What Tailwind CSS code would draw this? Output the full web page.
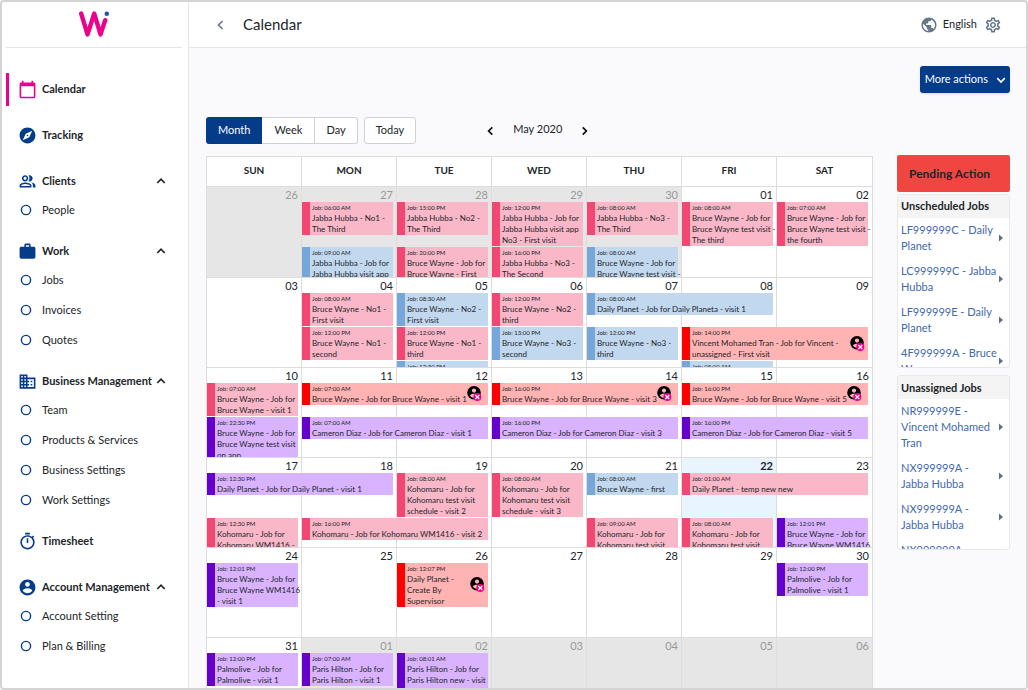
<!DOCTYPE html>
<html lang="en">
<head>
<meta charset="utf-8">
<meta name="viewport" content="width=device-width, initial-scale=1">
<title>Calendar</title>
<script src="https://cdn.jsdelivr.net/npm/@tailwindcss/browser@4"></script>
</head>
<body class="font-['Lato',sans-serif] text-[#212529]">
<svg class="hidden" aria-hidden="true">
  <symbol id="i-dot" viewBox="0 0 12 12"><circle cx="6" cy="6" r="4.6" fill="none" stroke="currentColor" stroke-width="1.4"/></symbol>
  <symbol id="i-up" viewBox="0 0 10 10"><path d="M1.3 7 5 3.2 8.7 7" fill="none" stroke="currentColor" stroke-width="1.7"/></symbol>
  <symbol id="i-unassigned" viewBox="0 0 16 16">
    <circle cx="7" cy="6.8" r="6.8" fill="#000"/>
    <circle cx="7" cy="4.6" r="2.1" fill="#ffb3b3"/>
    <path d="M2.9 9.8C3.2 8.2 5.4 7.7 7 7.7s3.8.5 4.1 2.1A5 5 0 0 1 7 11.900a5 5 0 0 1-4.100-2.100z" fill="#ffb3b3"/>
    <circle cx="10.300" cy="11" r="4" fill="#ec008c"/>
    <path d="m8.300 9 4 4m0-4-4 4" stroke="#fff" stroke-width="1.1"/>
  </symbol>
</svg>

<div class="flex h-screen overflow-hidden rounded-sm border-2 border-[#d4d4d4] bg-white">
  <aside class="w-[187px] shrink-0 border-r border-[#e3e5e8]">
    <div class="mr-1.5 ml-1 flex h-[46px] items-center justify-center border-b border-[#e3e5e8]">
      <svg class="h-[28px] w-[32px]" viewBox="0 0 32 28" role="img" aria-label="Home">
        <path d="M3.200 2.600 9.500 23.400 16.200 2.600 22.500 23.400 27.200 9.200" fill="none" stroke="#ec008c" stroke-width="4.400" stroke-linejoin="round" stroke-linecap="round"/>
        <circle cx="28.800" cy="2.700" r="2.300" fill="#1f5aa6"/>
      </svg>
    </div>
    <nav id="nav" class="pt-[25px] text-[11px]" aria-label="Main"></nav>
  </aside>

  <div class="flex min-w-0 flex-1 flex-col">
    <header class="flex h-[46px] shrink-0 items-center border-b border-[#e3e5e8] pr-[24px] pl-[26px]">
      <button class="mr-[16px] text-[#64748b]" aria-label="Back">
        <svg class="h-[12px] w-[12px]" viewBox="0 0 12 12"><path d="M7.500 2 3.500 6l4 4" fill="none" stroke="currentColor" stroke-width="1.600"/></svg>
      </button>
      <h1 class="flex-1 text-[15px]">Calendar</h1>
      <button class="flex items-center gap-[5px] text-[11px]">
        <svg class="h-[18px] w-[18px] text-[#64788a]" viewBox="0 0 24 24" fill="currentColor"><path d="M12 2C6.480 2 2 6.480 2 12s4.480 10 10 10 10-4.480 10-10S17.520 2 12 2zm-1 17.930c-3.950-.49-7-3.850-7-7.930 0-.62.080-1.210.21-1.790L9 15v1c0 1.100.9 2 2 2v1.930zm6.900-2.540c-.26-.81-1-1.390-1.900-1.390h-1v-3c0-.55-.45-1-1-1H8v-2h2c.55 0 1-.45 1-1V7h2c1.100 0 2-.9 2-2v-.41c2.930 1.190 5 4.060 5 7.410 0 2.080-.8 3.970-2.100 5.390z"/></svg>
        English
      </button>
      <button class="ml-[7px] text-[#64788a]" aria-label="Settings">
        <svg class="h-[18px] w-[18px]" viewBox="0 0 24 24" fill="currentColor"><path d="M19.430 12.980c.04-.32.070-.64.070-.98s-.03-.66-.07-.98l2.110-1.650c.19-.15.24-.42.120-.64l-2-3.460c-.09-.16-.26-.25-.44-.25-.06 0-.12.010-.17.030l-2.490 1c-.52-.4-1.080-.73-1.690-.98l-.38-2.650C14.460 2.180 14.250 2 14 2h-4c-.25 0-.46.18-.49.420l-.38 2.650c-.61.250-1.170.590-1.690.980l-2.490-1c-.06-.02-.12-.03-.18-.03-.17 0-.34.090-.43.250l-2 3.460c-.13.220-.07.490.120.640l2.110 1.650c-.04.320-.07.650-.07.980s.030.660.070.980l-2.110 1.650c-.19.150-.24.420-.12.640l2 3.460c.09.160.260.250.440.250.060 0 .12-.01.170-.03l2.490-1c.52.400 1.080.730 1.690.980l.38 2.650c.03.240.240.420.490.420h4c.25 0 .46-.18.490-.42l.38-2.650c.61-.25 1.170-.59 1.690-.98l2.490 1c.06.020.120.030.180.030.17 0 .34-.09.430-.25l2-3.460c.12-.22.070-.49-.12-.64l-2.110-1.650zm-1.980-1.710c.04.310.050.520.050.730s-.02.430-.05.730l-.14 1.130.89.700 1.080.840-.7 1.210-1.270-.51-1.040-.42-.9.680c-.43.320-.84.560-1.250.730l-1.060.430-.16 1.130-.2 1.350h-1.400l-.19-1.350-.16-1.130-1.060-.43c-.43-.18-.83-.41-1.230-.71l-.91-.7-1.060.430-1.270.510-.7-1.210 1.080-.84.890-.7-.14-1.130c-.03-.31-.05-.54-.05-.74s.020-.43.050-.73l.14-1.130-.89-.7-1.080-.84.700-1.210 1.270.510 1.040.420.900-.68c.43-.32.840-.56 1.250-.73l1.060-.43.160-1.130.2-1.350h1.390l.19 1.350.16 1.130 1.060.430c.43.180.83.410 1.230.710l.91.700 1.060-.43 1.270-.51.700 1.210-1.070.850-.89.700.14 1.130zM12 8c-2.210 0-4 1.790-4 4s1.790 4 4 4 4-1.790 4-4-1.790-4-4-4zm0 6c-1.100 0-2-.9-2-2s.9-2 2-2 2 .9 2 2-.9 2-2 2z"/></svg>
      </button>
    </header>

    <main class="min-h-0 flex-1 overflow-hidden bg-[#fafafc] pr-[16px] pl-[17px]">
      <div class="flex justify-end pt-[18px]">
        <button class="flex h-[27px] items-center gap-[8px] rounded-[3px] bg-[#043c8a] pr-[4px] pl-[5px] text-[11px] text-white shadow">
          More actions
          <svg class="h-[10px] w-[10px]" viewBox="0 0 10 10"><path d="M1.200 3.200 5 7l3.800-3.800" fill="none" stroke="currentColor" stroke-width="1.700"/></svg>
        </button>
      </div>

      <div class="mt-[24px] flex h-[27px] items-center text-[11px]">
        <div class="flex h-full rounded-[3px]" role="group" aria-label="View">
          <button class="rounded-l-[3px] bg-[#043c8a] px-[12px] text-white" aria-pressed="true">Month</button>
          <button class="border-y border-r border-[#cfd1d4] bg-white px-[12px]">Week</button>
          <button class="rounded-r-[3px] border-y border-r border-[#cfd1d4] bg-white px-[11px]">Day</button>
        </div>
        <button class="ml-[6px] h-full rounded-[3px] border border-[#cfd1d4] bg-white px-[11px]">Today</button>
        <div class="ml-[69px] flex items-center gap-[18px]">
          <button aria-label="Previous month"><svg class="h-[10px] w-[10px]" viewBox="0 0 10 10"><path d="M7.300 1.300 3.600 5l3.700 3.700" fill="none" stroke="#111" stroke-width="1.700"/></svg></button>
          <h2 class="pb-[2px]">May 2020</h2>
          <button aria-label="Next month"><svg class="h-[10px] w-[10px]" viewBox="0 0 10 10"><path d="M2.700 1.300 6.400 5 2.700 8.700" fill="none" stroke="#111" stroke-width="1.700"/></svg></button>
        </div>
      </div>

      <div class="mt-[11px] flex items-start gap-[24px]">
        <section class="mt-px min-w-0 flex-1 border border-b-0 border-[#dddddd] bg-white" aria-label="May 2020">
          <div class="grid h-[29px] grid-cols-7 divide-x divide-[#dddddd] text-center text-[10px] leading-[27px] font-bold">
            <div>SUN</div><div>MON</div><div>TUE</div><div>WED</div><div>THU</div><div>FRI</div><div>SAT</div>
          </div>
          <div id="weeks"></div>
        </section>

        <aside class="w-[113px] shrink-0">
          <h2 class="mb-[2px] h-[37px] rounded-[2px] bg-[#f04641] pl-[12px] text-[12px] leading-[38px] font-bold">Pending Action</h2>
          <section class="h-[174px] overflow-hidden rounded-[3px] border border-[#e6e8ec] bg-white">
            <h3 class="h-[23px] bg-[#f4f4f4] pl-[3px] text-[11px] leading-[22px] font-bold">Unscheduled Jobs</h3>
            <ul id="unscheduled" class="flex flex-col gap-[9px] pt-[4px] pr-[6px] pl-[3px] text-[11px] leading-[16px] text-[#3f68ad]"></ul>
          </section>
          <section class="mt-[7px] h-[175px] overflow-hidden rounded-[3px] border border-[#e6e8ec] bg-white">
            <h3 class="h-[23px] bg-[#f4f4f4] pl-[3px] text-[11px] leading-[23px] font-bold">Unassigned Jobs</h3>
            <ul id="unassigned" class="flex flex-col gap-[9px] pt-[4px] pr-[6px] pl-[3px] text-[11px] leading-[16px] text-[#3f68ad]"></ul>
          </section>
        </aside>
      </div>
    </main>
  </div>
</div>

<script>
const icons = {
  calendar: '<path d="M20 3h-1V1h-2v2H7V1H5v2H4c-1.100 0-2 .9-2 2v16c0 1.100.9 2 2 2h16c1.100 0 2-.9 2-2V5c0-1.100-.9-2-2-2zm0 18H4V8h16v13z"/>',
  compass: '<path d="M12 10.900c-.61 0-1.100.49-1.100 1.100s.49 1.100 1.100 1.100c.61 0 1.100-.49 1.100-1.100s-.49-1.100-1.100-1.100zM12 2C6.480 2 2 6.480 2 12s4.480 10 10 10 10-4.480 10-10S17.520 2 12 2zm2.190 12.190L6 18l3.810-8.190L18 6l-3.810 8.190z"/>',
  people: '<path d="M16.500 13.200C18 14.100 18.800 15.300 18.800 17v2.500H22V17c0-2.180-2.800-3.400-5.500-3.800zM14.500 12c2.210 0 4-1.790 4-4s-1.790-4-4-4c-.47 0-.91.100-1.330.240C14 5.270 14.500 6.580 14.500 8s-.5 2.730-1.330 3.760c.42.140.860.240 1.330.240zM9 12c2.210 0 4-1.790 4-4s-1.790-4-4-4-4 1.790-4 4 1.790 4 4 4zm0-6c1.100 0 2 .9 2 2s-.9 2-2 2-2-.9-2-2 .9-2 2-2zm0 7.200c-2.670 0-7 1.140-7 3.800v2.500h15V17c0-2.660-5.330-3.800-8-3.800zm6 4.400H4v-.6C4.200 16.290 6.300 15.200 9 15.200s5.800 1.090 6 1.800v.6z"/>',
  work: '<path d="M20 6h-4V4c0-1.110-.89-2-2-2h-4c-1.110 0-2 .89-2 2v2H4c-1.110 0-2 .89-2 2v11c0 1.110.890 2 2 2h16c1.110 0 2-.89 2-2V8c0-1.110-.89-2-2-2zm-6 0h-4V4h4v2z"/>',
  building: '<path d="M12 7V3H2v18h20V7H12zM6 19H4v-2h2v2zm0-4H4v-2h2v2zm0-4H4V9h2v2zm0-4H4V5h2v2zm4 12H8v-2h2v2zm0-4H8v-2h2v2zm0-4H8V9h2v2zm0-4H8V5h2v2zm10 12h-8v-2h2v-2h-2v-2h2v-2h-2V9h8v10zm-2-8h-2v2h2v-2zm0 4h-2v2h2v-2z"/>',
  timer: '<path d="M15 1H9v2h6V1zm-4 13h2V8h-2v6zm8.030-6.610 1.420-1.420c-.43-.51-.9-.99-1.410-1.410l-1.420 1.420C16.070 4.740 14.120 4 12 4c-4.970 0-9 4.030-9 9s4.020 9 9 9 9-4.030 9-9c0-2.120-.74-4.070-1.970-5.610zM12 20c-3.870 0-7-3.130-7-7s3.130-7 7-7 7 3.130 7 7-3.130 7-7 7z"/>',
  account: '<path d="M12 2C6.480 2 2 6.480 2 12s4.480 10 10 10 10-4.480 10-10S17.520 2 12 2zm0 3c1.660 0 3 1.340 3 3s-1.340 3-3 3-3-1.340-3-3 1.340-3 3-3zm0 14.200c-2.500 0-4.710-1.280-6-3.220.030-1.990 4-3.080 6-3.080 1.990 0 5.970 1.090 6 3.080-1.290 1.940-3.500 3.220-6 3.220z"/>'
};
const nav = [
  ['Calendar', 'calendar', null, true],
  ['Tracking', 'compass'],
  ['Clients', 'people', ['People']],
  ['Work', 'work', ['Jobs', 'Invoices', 'Quotes']],
  ['Business Management', 'building', ['Team', 'Products & Services', 'Business Settings', 'Work Settings']],
  ['Timesheet', 'timer'],
  ['Account Management', 'account', ['Account Setting', 'Plan & Billing']]
];
const esc = s => s.replace(/&/g, '&amp;');
document.getElementById('nav').innerHTML = nav.map(([label, icon, subs, active]) => {
  const svg = `<svg class="h-[19px] w-[19px] shrink-0 ${active ? 'text-[#ec008c]' : 'text-[#043c8a]'}" viewBox="0 0 24 24" fill="currentColor">${icons[icon]}</svg>`;
  if (!subs) return `<a href="#" class="mb-[13px] ml-1 flex h-[33px] items-center gap-[5px] border-l-[3px] pl-[9px] font-bold ${active ? 'border-[#ec008c]' : 'border-transparent'}">${svg}${label}</a>`;
  return `<div class="mb-[10px] pt-[2px]">
    <button class="ml-[16px] flex h-[28px] w-[148px] items-center gap-[5px] font-bold whitespace-nowrap" aria-expanded="true">${svg}<span class="min-w-0 flex-1 text-left">${label}</span><svg class="h-[10px] w-[10px] shrink-0"><use href="#i-up"/></svg></button>
    ${subs.map(s => `<a href="#" class="flex h-[30px] items-center gap-[10px] pl-[18px]"><svg class="h-[12px] w-[12px] text-[#043c8a]"><use href="#i-dot"/></svg>${esc(s)}</a>`).join('')}
  </div>`;
}).join('');

const tone = {
  pink: 'border-[#f24773] bg-[#f9b7c8]',
  blue: 'border-[#76a7da] bg-[#c1d8ef]',
  red: 'border-[#ff0000] bg-[#ffb3b3]',
  violet: 'border-[#6600cc] bg-[#d9b3ff]'
};
const col = ['', 'col-start-1', 'col-start-2', 'col-start-3', 'col-start-4', 'col-start-5', 'col-start-6', 'col-start-7'];
const row = ['', 'row-start-1', 'row-start-2', 'row-start-3'];
const span = ['', 'col-span-1', 'col-span-2'];
// events: [row, column, span, tone, time, title]; "|" starts a new line of the title
const weeks = [
  { days: '26 27 28 29 30 01 02', out: [0, 1, 2, 3, 4], events: [
    [1, 2, 1, 'pink', '06:00 AM', 'Jabba Hubba - No1 -|The Third'],
    [1, 3, 1, 'pink', '15:00 PM', 'Jabba Hubba - No2 -|The Third'],
    [1, 4, 1, 'pink', '12:00 PM', 'Jabba Hubba - Job for|Jabba Hubba visit app|No3 - First visit'],
    [1, 5, 1, 'pink', '08:00 AM', 'Jabba Hubba - No3 -|The Third'],
    [1, 6, 1, 'pink', '08:00 AM', 'Bruce Wayne - Job for|Bruce Wayne test visit -|The third'],
    [1, 7, 1, 'pink', '07:00 AM', 'Bruce Wayne - Job for|Bruce Wayne test visit -|the fourth'],
    [2, 2, 1, 'blue', '09:00 AM', 'Jabba Hubba - Job for|Jabba Hubba visit app'],
    [2, 3, 1, 'pink', '20:00 PM', 'Bruce Wayne - Job for|Bruce Wayne - First'],
    [2, 4, 1, 'pink', '16:00 PM', 'Jabba Hubba - No3 -|The Second'],
    [2, 5, 1, 'blue', '08:00 AM', 'Bruce Wayne - Job for|Bruce Wayne test visit -']] },
  { days: '03 04 05 06 07 08 09', out: [], events: [
    [1, 2, 1, 'pink', '08:00 AM', 'Bruce Wayne - No1 -|First visit'],
    [1, 3, 1, 'blue', '08:30 AM', 'Bruce Wayne - No2 -|First visit'],
    [1, 4, 1, 'pink', '12:00 PM', 'Bruce Wayne - No2 -|third'],
    [1, 5, 2, 'blue', '08:00 AM', 'Daily Planet - Job for Daily Planeta - visit 1'],
    [2, 2, 1, 'pink', '12:00 PM', 'Bruce Wayne - No1 -|second'],
    [2, 3, 1, 'pink', '12:00 PM', 'Bruce Wayne - No1 -|third'],
    [2, 4, 1, 'blue', '13:00 PM', 'Bruce Wayne - No3 -|second'],
    [2, 5, 1, 'blue', '12:00 PM', 'Bruce Wayne - No3 -|third'],
    [2, 6, 2, 'red', '14:00 PM', 'Vincent Mohamed Tran - Job for Vincent -|unassigned - First visit'],
    [3, 3, 1, 'blue', '12:30 PM', ''],
    [3, 6, 1, 'blue', '05:00 AM', '']] },
  { days: '10 11 12 13 14 15 16', out: [], events: [
    [1, 1, 1, 'pink', '07:00 AM', 'Bruce Wayne - Job for|Bruce Wayne - visit 1'],
    [1, 2, 2, 'red', '07:00 AM', 'Bruce Wayne - Job for Bruce Wayne - visit 1'],
    [1, 4, 2, 'red', '16:00 PM', 'Bruce Wayne - Job for Bruce Wayne - visit 3'],
    [1, 6, 2, 'red', '16:00 PM', 'Bruce Wayne - Job for Bruce Wayne - visit 5'],
    [2, 1, 1, 'violet', '22:30 PM', 'Bruce Wayne - Job for|Bruce Wayne test visit|on app'],
    [2, 2, 2, 'violet', '07:00 AM', 'Cameron Diaz - Job for Cameron Diaz - visit 1'],
    [2, 4, 2, 'violet', '16:00 PM', 'Cameron Diaz - Job for Cameron Diaz - visit 3'],
    [2, 6, 2, 'violet', '16:00 PM', 'Cameron Diaz - Job for Cameron Diaz - visit 5']] },
  { days: '17 18 19 20 21 22 23', out: [], today: 5, events: [
    [1, 1, 2, 'violet', '12:30 PM', 'Daily Planet - Job for Daily Planet - visit 1'],
    [1, 3, 1, 'pink', '08:00 AM', 'Kohomaru - Job for|Kohomaru test visit|schedule - visit 2'],
    [1, 4, 1, 'pink', '08:00 AM', 'Kohomaru - Job for|Kohomaru test visit|schedule - visit 3'],
    [1, 5, 1, 'blue', '08:00 AM', 'Bruce Wayne - first'],
    [1, 6, 2, 'pink', '01:00 AM', 'Daily Planet - temp new new'],
    [2, 1, 1, 'pink', '12:30 PM', 'Kohomaru - Job for|Kohomaru WM1416 -'],
    [2, 2, 2, 'pink', '16:00 PM', 'Kohomaru - Job for Kohomaru WM1416 - visit 2'],
    [2, 5, 1, 'pink', '09:00 AM', 'Kohomaru - Job for|Kohomaru test visit'],
    [2, 6, 1, 'pink', '08:00 AM', 'Kohomaru - Job for|Kohomaru test visit'],
    [2, 7, 1, 'violet', '12:01 PM', 'Bruce Wayne - Job for|Bruce Wayne WM1416']] },
  { days: '24 25 26 27 28 29 30', out: [], events: [
    [1, 1, 1, 'violet', '12:01 PM', 'Bruce Wayne - Job for|Bruce Wayne WM1416|- visit 1'],
    [1, 3, 1, 'red', '12:07 PM', 'Daily Planet -|Create By|Supervisor'],
    [1, 7, 1, 'violet', '12:00 PM', 'Palmolive - Job for|Palmolive - visit 1']] },
  { days: '31 01 02 03 04 05 06', out: [1, 2, 3, 4, 5, 6], events: [
    [1, 1, 1, 'violet', '12:00 PM', 'Palmolive - Job for|Palmolive - visit 1'],
    [1, 2, 1, 'violet', '07:00 AM', 'Paris Hilton - Job for|Paris Hilton - visit 1'],
    [1, 3, 1, 'violet', '08:01 AM', 'Paris Hilton - Job for|Paris Hilton new - visit|1']] }
];
// On multi-day events the badge follows a one-line title; elsewhere it sits at the right edge.
document.getElementById('weeks').innerHTML = weeks.map((w, n) => `
  <div class="grid overflow-hidden border-t border-[#dddddd] ${n ? 'h-[90px]' : 'h-[91px]'}">
    <div class="col-start-1 row-start-1 grid grid-cols-7 divide-x divide-[#dddddd] text-right text-[11px] leading-[15px]">
      ${w.days.split(' ').map((d, i) => `<div class="pr-[3px] ${w.out.includes(i) ? 'bg-[#e6e6e6] text-[#999999]' : w.today === i ? 'bg-[#e8f4ff] font-bold' : ''}">${d}</div>`).join('')}
    </div>
    <div class="col-start-1 row-start-1 grid h-[90px] grid-cols-7 content-start items-start gap-y-px overflow-hidden pt-[15px]">
      ${w.events.map(([r, c, s, t, time, title]) => `
      <div class="${row[r]} ${col[c]} ${span[s]} ${tone[t]} mr-[4px] flex items-center border-l-[8px] pr-[2px] pl-[2px] ${title.includes('|') ? 'justify-between' : ''}">
        <div class="min-w-0 whitespace-nowrap"><p class="text-[6px] leading-[11px]">Job: ${time}</p><p class="text-[8px] leading-[11px]">${title.replace(/\|/g, '<br>')}</p></div>
        ${t === 'red' ? '<svg class="h-[16px] w-[16px] shrink-0" role="img" aria-label="Unassigned"><use href="#i-unassigned"/></svg>' : ''}
      </div>`).join('')}
    </div>
  </div>`).join('');

const jobs = list => list.map(j => `<li><a href="#" class="flex items-center justify-between whitespace-nowrap"><span>${j.replace(/\|/g, '<br>')}</span><svg class="h-[8px] w-[4px] shrink-0 text-[#5f6f82]" viewBox="0 0 4 8"><path d="M0 0.500 4 4 0 7.500z" fill="currentColor"/></svg></a></li>`).join('');
document.getElementById('unscheduled').innerHTML = jobs(['LF999999C - Daily|Planet', 'LC999999C - Jabba|Hubba', 'LF999999E - Daily|Planet', '4F999999A - Bruce|Wayne']);
document.getElementById('unassigned').innerHTML = jobs(['NR999999E -|Vincent Mohamed|Tran', 'NX999999A -|Jabba Hubba', 'NX999999A -|Jabba Hubba', 'NX999999A -|Jabba Hubba']);
</script>
</body>
</html>
